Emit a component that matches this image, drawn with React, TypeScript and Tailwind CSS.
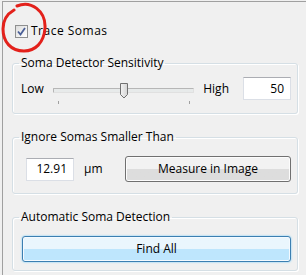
import React from 'react'

function GroupBox({ title, children, className = '' }: { title: string; children: React.ReactNode; className?: string }) {
  return (
    <fieldset
      className={`border border-[#d5dfe5] rounded-[3px] shadow-[inset_1px_1px_0_#fff,1px_1px_0_#fff] ${className}`}
    >
      <legend className="ml-[6px] px-[2px] leading-[16px] text-[#000]">{title}</legend>
      {children}
    </fieldset>
  )
}

function TextBox({ value, className = '' }: { value: string; className?: string }) {
  return (
    <div
      className={`h-[23px] bg-white border border-[#dbdfe6] border-t-[#abadb3] flex items-center justify-end pr-[6px] ${className}`}
    >
      {value}
    </div>
  )
}

function Slider() {
  return (
    <div className="relative flex-1 h-[23px]">
      <div className="absolute left-0 right-0 top-[11px] h-[5px] border border-[#b6b6b6] border-b-[#e0e0e0] border-r-[#e0e0e0] bg-[#e7eaea] rounded-[1px]" />
      <svg className="absolute left-[66px] top-[6px]" width="10" height="16" viewBox="0 0 10 16">
        <defs>
          <linearGradient id="th" x1="0" y1="0" x2="1" y2="0">
            <stop offset="0" stopColor="#f2f2f2" />
            <stop offset="1" stopColor="#d4d4d4" />
          </linearGradient>
        </defs>
        <path d="M1.5 0.5 H8.5 V11.5 L5 15 L1.5 11.5 Z" fill="url(#th)" stroke="#707070" strokeWidth="1" />
      </svg>
      <div className="absolute left-[5px] top-[24px] w-px h-[3px] bg-[#a0a0a0]" />
      <div className="absolute right-[4px] top-[24px] w-px h-[3px] bg-[#a0a0a0]" />
    </div>
  )
}

export default function App() {
  return (
    <div
      className="relative w-[306px] h-[275px] overflow-hidden bg-[#f0f0f0] text-[12px] text-black"
      style={{ fontFamily: '"Open Sans", "Noto Sans", sans-serif' }}
    >
      <div className="ml-[2px] mt-[1px] h-full border-l border-t border-[#a0a0a0] pl-[9px] pr-[8px]">
        {/* checkbox row */}
        <div className="mt-[21px] ml-[3px] flex items-center gap-[3px] h-[16px]">
          <div className="w-[13px] h-[13px] border border-[#8e8f8f] bg-gradient-to-br from-[#dcdcdc] to-white flex items-center justify-center">
            <svg width="11" height="11" viewBox="0 0 11 11">
              <path d="M2 5.5 L4.5 8.5 L9 2" fill="none" stroke="#4a5f97" strokeWidth="1.8" />
            </svg>
          </div>
          <span className="leading-[16px] tracking-[0.5px]">Trace Somas</span>
        </div>

        <GroupBox title="Soma Detector Sensitivity" className="mt-[16px] h-[59px]">
          <div className="flex items-center pl-[8px] pr-[6px] pt-[6px]">
            <span>Low</span>
            <div className="ml-[9px] mr-[9px] flex-1 flex">
              <Slider />
            </div>
            <span>High</span>
            <TextBox value="50" className="ml-[14px] w-[48px]" />
          </div>
        </GroupBox>

        <GroupBox title="Ignore Somas Smaller Than" className="mt-[15px] h-[65px]">
          <div className="flex items-center pl-[13px] pr-[6px] pt-[11px]">
            <TextBox value="12.91" className="w-[48px]" />
            <span className="ml-[10px]">µm</span>
            <button className="ml-auto w-[166px] h-[26px] border border-[#707070] rounded-[3px] bg-gradient-to-b from-[#f2f2f2] from-50% to-[#dddddd] to-50% shadow-[inset_0_0_0_1px_#fcfcfc]">
              Measure in Image
            </button>
          </div>
        </GroupBox>

        <GroupBox title="Automatic Soma Detection" className="mt-[15px] h-[62px]">
          <div className="pl-[9px] pr-[6px] pt-[11px]">
            <button className="w-full h-[26px] border border-[#3c7fb1] rounded-[3px] bg-gradient-to-b from-[#eaf6fd] from-50% to-[#bee6fd] to-50% shadow-[inset_0_0_0_1px_#f4faff,0_0_2px_#5fc6ff]">
              Find All
            </button>
          </div>
        </GroupBox>
      </div>

      {/* red annotation circle */}
      <svg className="absolute left-0 top-0 pointer-events-none" width="50" height="56" viewBox="0 0 50 56">
        <path
          d="M17 6 C31 0, 46 11, 45 28 C44 43, 35 51, 24 51 C11 51, 3 42, 3 29 C3 20, 7 14, 14 10"
          fill="none"
          stroke="#e3211b"
          strokeWidth="3"
          strokeLinecap="round"
        />
      </svg>
    </div>
  )
}
